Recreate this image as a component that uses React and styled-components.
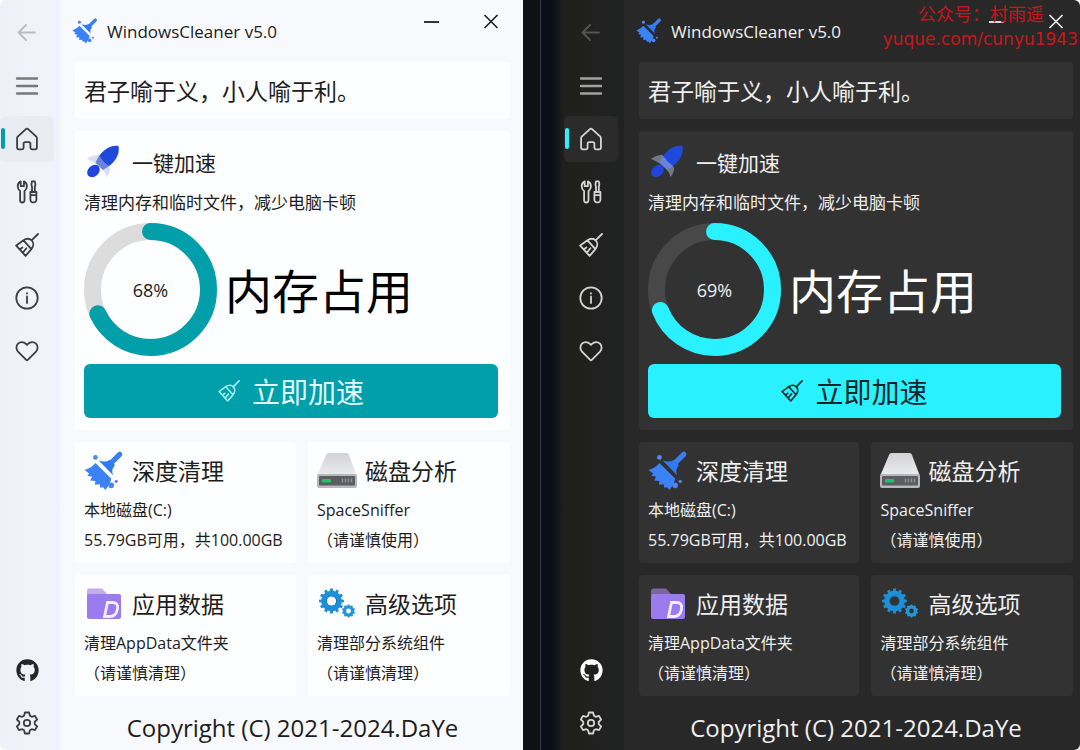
import React from "react";
import styled, { createGlobalStyle, ThemeProvider } from "styled-components";
import { FaGithub } from "react-icons/fa";

const light = {
  text: "#1d1d20",
  strong: "#000",
  icon: "#3c3d42",
  github: "#24262b",
  muted: "#bcbdc2",
  menu: "#77787c",
  sidebar: "linear-gradient(90deg, #eef2f6, #f1f3fc)",
  content: "#f8f9fd",
  card: "#fdfeff",
  active: "#e9ecf2",
  accent: "#009faa",
  onAccent: "#e4fbfd",
  buttonIcon: "#9ff0f6",
  track: "#dcdcdd",
  edge: "13px",
  titleEdge: "9px",
};

const dark = {
  text: "#efefef",
  strong: "#fff",
  icon: "#d4d4d4",
  github: "#fff",
  muted: "#555355",
  menu: "#a3a1a1",
  sidebar: "linear-gradient(90deg, #1f201d, #212222)",
  content: "#282828",
  card: "#323232",
  active: "#2b2b2b",
  accent: "#29f1ff",
  onAccent: "#10262a",
  buttonIcon: "#10262a",
  track: "#484848",
  edge: "7px",
  titleEdge: "1px",
};

const gearPath = (cx, cy, outer, inner, teeth) => {
  const step = (Math.PI * 2) / teeth;
  const points = [];
  for (let i = 0; i < teeth; i++) {
    [
      [-0.3, inner],
      [-0.2, outer],
      [0.2, outer],
      [0.3, inner],
    ].forEach(([offset, r]) => {
      const a = (i + offset) * step - Math.PI / 2;
      points.push(
        `${(cx + r * Math.cos(a)).toFixed(2)} ${(cy + r * Math.sin(a)).toFixed(2)}`
      );
    });
  }
  return `M${points.join("L")}Z`;
};

const LineIcon = ({ children }) => (
  <svg
    width="24"
    height="24"
    viewBox="0 0 24 24"
    fill="none"
    stroke="currentColor"
    strokeWidth="1.8"
    strokeLinecap="round"
    strokeLinejoin="round"
    aria-hidden="true"
  >
    {children}
  </svg>
);

const BackIcon = () => (
  <LineIcon>
    <path d="M20 11.5H4M11 4L3.5 11.5 11 19" />
  </LineIcon>
);

const MenuIcon = () => (
  <LineIcon>
    <path d="M2 4.5h20M2 12h20M2 19.5h20" strokeWidth="2.4" />
  </LineIcon>
);

const HomeIcon = () => (
  <LineIcon>
    <path d="M10.6 2.3a2.1 2.1 0 0 1 2.8 0l7.6 7c.6.5.9 1.2.9 2v9.2a1.8 1.8 0 0 1-1.8 1.8h-3.2a1.5 1.5 0 0 1-1.5-1.5v-4.3a1.3 1.3 0 0 0-1.3-1.3h-4.2a1.3 1.3 0 0 0-1.3 1.3v4.3a1.5 1.5 0 0 1-1.5 1.5H3.9a1.8 1.8 0 0 1-1.8-1.8v-9.2c0-.8.3-1.500.9-2z" />
  </LineIcon>
);

const ToolsIcon = () => (
  <LineIcon>
    <path d="M5.7 1.4C3.9 2.2 2.7 4 2.7 6.3c0 2.1.9 3.7 2.4 4.7v9.3a2.2 2.2 0 0 0 4.4 0V11c1.5-1 2.4-2.6 2.4-4.7 0-2.3-1.2-4.1-3-4.9v4.8H5.7z" />
    <path d="M17 1.4h2.8l.6 3-.6 2.6v5h-2.8V7l-.6-2.6zM15.4 12h6v7.8a2.6 2.6 0 0 1-2.6 2.6H18a2.6 2.6 0 0 1-2.6-2.6zM15.4 15.2h6" />
  </LineIcon>
);

const BroomIcon = () => (
  <LineIcon>
    <path d="M23 1l-6.2 6.2M8.5 7.3c2.9-2 6.3-1.7 8.3.2 2 2.1 2 5.7-.4 8.6zM8.5 7.3L1.2 12.6l9.4 10.3 5.8-6.8M4.8 16.5l2.6-2M7.8 19.7l3.6-4.5" />
  </LineIcon>
);

const InfoIcon = () => (
  <LineIcon>
    <circle cx="12" cy="12" r="10.7" />
    <path d="M12 10.5V17M12 7.2v.3" />
  </LineIcon>
);

const HeartIcon = () => (
  <LineIcon>
    <path d="M12 5.8l-1-1c-2.3-2.3-5.800-2.3-8-.1-2.100 2.200-2.100 5.700 0 7.900l8.200 8.300c.5.4 1.100.4 1.600 0l8.200-8.300c2.100-2.200 2.100-5.700 0-7.900-2.200-2.200-5.700-2.200-8 .1z" />
  </LineIcon>
);

const SettingsIcon = () => (
  <LineIcon>
    <path d="M9.9 1.5h4.2l.8 3.3 1.8 1 3.3-.9 2.1 3.6-2.4 2.4v2.2l2.4 2.4-2.1 3.6-3.3-.9-1.8 1-.8 3.3H9.9l-.8-3.3-1.8-1-3.3.9-2.1-3.6 2.4-2.4v-2.2L1.9 8.5 4 4.9l3.3.9 1.8-1z" />
    <circle cx="12" cy="12" r="3.2" />
  </LineIcon>
);

const MinimizeIcon = () => (
  <svg width="16" height="16" viewBox="0 0 16 16" aria-hidden="true">
    <path d="M1 8h15" stroke="currentColor" strokeWidth="1.8" />
  </svg>
);

const CloseIcon = () => (
  <svg width="16" height="16" viewBox="0 0 16 16" aria-hidden="true">
    <path
      d="M1.5 1l13 13M14.5 1l-13 13"
      stroke="currentColor"
      strokeWidth="1.6"
    />
  </svg>
);

const BlueBroom = ({ size }) => (
  <svg width={size} height={size} viewBox="0 0 42 42" aria-hidden="true">
    <path
      d="M37.5 3.5L29 12"
      stroke="#3d7df0"
      strokeWidth="5.5"
      strokeLinecap="round"
    />
    <path d="M15.5 10q6.5 2.5 11.5-.5l5.500 5.500q-4.500 4.500-2 10.500z" fill="#2f7af0" />
    <path
      d="M12 12.5L28.5 29q-.5 5-6 12L20 38l-3 .5-.5-3.5-5 .5.5-4-5.500-.5 2-4-5-1 2-2.500L.5 20Q8 17.500 12 12.500z"
      fill="#3b82f6"
    />
    <circle cx="12" cy="6.7" r="2.5" fill="#5b84ea" />
    <circle cx="28.5" cy="36" r="3" fill="#4c83ee" />
    <circle cx="33.8" cy="31.8" r="1.7" fill="#6f7fe0" />
  </svg>
);

const Rocket = () => (
  <svg width="40" height="40" viewBox="0 0 40 40" aria-hidden="true">
    <path
      d="M34.5 3C36.5 12 30 21 19 27l-7.500-7.500C16 9 25 1.500 34.500 3z"
      fill="#1f49dc"
    />
    <ellipse
      cx="9.5"
      cy="28"
      rx="7"
      ry="5.4"
      transform="rotate(-42 9.5 28)"
      fill="#1f45dc"
    />
    <path
      d="M3 16q6-4.500 11.500-4l2 2.500q3 5 8 8l1.500 2q.5 4.500-3.500 9.500-1.500-6-6-9.500-5-5-13.500-8.500z"
      fill="#b4bedc"
      fillOpacity="0.5"
    />
  </svg>
);

const Disk = () => (
  <svg width="40" height="40" viewBox="0 0 40 40" aria-hidden="true">
    <defs>
      <linearGradient id="diskTop" x1="0" y1="0" x2="0" y2="1">
        <stop offset="0" stopColor="#d2d2d4" />
        <stop offset="1" stopColor="#ececee" />
      </linearGradient>
    </defs>
    <path d="M9 4q.5-2 2.500-2h18q2 0 2.500 2l7.500 20h-39z" fill="url(#diskTop)" />
    <rect x="0" y="23" width="40" height="14" rx="2" fill="#b7b8ba" />
    <rect x="2" y="25" width="36" height="9.5" rx="1" fill="#5c5d60" />
    <rect x="5" y="28" width="9" height="3.5" rx="1" fill="#1fc36c" />
    <path
      d="M25.5 27.5v4M28.5 27.5v4M31.5 27.5v4M34.5 27.5v4"
      stroke="#8f9093"
      strokeWidth="1.5"
    />
  </svg>
);

const Folder = () => (
  <svg width="40" height="40" viewBox="0 0 40 40" aria-hidden="true">
    <path
      d="M3 7q0-2.500 2.500-2.500H18l5 5.500v6H3z"
      fill="#a57fe0"
      fillOpacity="0.65"
    />
    <rect x="3" y="10" width="34" height="25" rx="2" fill="#9b7bf0" />
    <path
      d="M23.5 18.5h5q6 0 5 6.500-1.300 7.500-8 7.500h-5z"
      fill="none"
      stroke="#f2edff"
      strokeWidth="2.8"
    />
  </svg>
);

const Gears = () => (
  <svg width="40" height="40" viewBox="0 0 40 40" aria-hidden="true">
    <path d={gearPath(14.5, 17, 12.5, 10.3, 12)} fill="#1e8fd6" />
    <path d={gearPath(31.5, 27, 6.6, 5.6, 10)} fill="#2596d8" />
    <circle cx="14.5" cy="17" r="5" fill="none" stroke="#1673b3" />
    <GearHole cx="14.5" cy="17" r="4.6" />
    <GearHole cx="31.5" cy="27" r="2.4" />
  </svg>
);

const tools = [
  {
    icon: <BlueBroom size={42} />,
    title: "深度清理",
    lines: ["本地磁盘(C:)", "55.79GB可用，共100.00GB"],
  },
  { icon: <Disk />, title: "磁盘分析", lines: ["SpaceSniffer", "（请谨慎使用）"] },
  {
    icon: <Folder />,
    title: "应用数据",
    lines: ["清理AppData文件夹", "（请谨慎清理）"],
  },
  {
    icon: <Gears />,
    title: "高级选项",
    lines: ["清理部分系统组件", "（请谨慎清理）"],
  },
];

const RADIUS = 58;

const MemoryRing = ({ value }) => {
  const length = 2 * Math.PI * RADIUS;
  return (
    <Ring role="img" aria-label={`内存占用 ${value}%`}>
      <svg width="133" height="133" viewBox="0 0 133 133">
        <RingTrack cx="66.5" cy="66.5" r={RADIUS} />
        <RingValue
          cx="66.5"
          cy="66.5"
          r={RADIUS}
          strokeDasharray={`${(length * value) / 100} ${length}`}
          transform="rotate(-90 66.5 66.5)"
        />
      </svg>
      <RingLabel>{value}%</RingLabel>
    </Ring>
  );
};

const CleanerWindow = ({ theme, memory }) => (
  <ThemeProvider theme={theme}>
    <Window>
      <Sidebar>
        <NavButton aria-label="返回" $tone="muted">
          <BackIcon />
        </NavButton>
        <NavButton aria-label="菜单" $tone="menu">
          <MenuIcon />
        </NavButton>
        <NavButton aria-label="主页" $active>
          <HomeIcon />
        </NavButton>
        <NavButton aria-label="工具">
          <ToolsIcon />
        </NavButton>
        <NavButton aria-label="清理">
          <BroomIcon />
        </NavButton>
        <NavButton aria-label="关于">
          <InfoIcon />
        </NavButton>
        <NavButton aria-label="赞助">
          <HeartIcon />
        </NavButton>
        <Spacer />
        <NavButton aria-label="GitHub" $tone="github">
          <FaGithub size={23} />
        </NavButton>
        <NavButton aria-label="设置">
          <SettingsIcon />
        </NavButton>
      </Sidebar>
      <Content>
        <TitleBar>
          <BlueBroom size={26} />
          <AppName>WindowsCleaner v5.0</AppName>
          <WindowButton aria-label="最小化">
            <MinimizeIcon />
          </WindowButton>
          <WindowButton aria-label="关闭">
            <CloseIcon />
          </WindowButton>
        </TitleBar>
        <Cards>
          <QuoteCard>君子喻于义，小人喻于利。</QuoteCard>
          <BoostCard>
            <CardHeader>
              <IconBox>
                <Rocket />
              </IconBox>
              <BoostTitle>一键加速</BoostTitle>
            </CardHeader>
            <BoostHint>清理内存和临时文件，减少电脑卡顿</BoostHint>
            <MemoryRow>
              <MemoryRing value={memory} />
              <MemoryTitle>内存占用</MemoryTitle>
            </MemoryRow>
            <BoostButton>
              <BroomIcon />
              立即加速
            </BoostButton>
          </BoostCard>
          <ToolGrid>
            {tools.map((tool) => (
              <ToolCard key={tool.title}>
                <CardHeader>
                  <IconBox>{tool.icon}</IconBox>
                  <ToolTitle>{tool.title}</ToolTitle>
                </CardHeader>
                <ToolText>
                  {tool.lines.map((line) => (
                    <p key={line}>{line}</p>
                  ))}
                </ToolText>
              </ToolCard>
            ))}
          </ToolGrid>
          <Footer>Copyright (C) 2021-2024.DaYe</Footer>
        </Cards>
      </Content>
    </Window>
  </ThemeProvider>
);

const App = () => (
  <>
    <GlobalStyle />
    <Desktop>
      <CleanerWindow theme={light} memory={68} />
      <Divider />
      <CleanerWindow theme={dark} memory={69} />
      <Watermark>
        <span>公众号：村雨遥</span>
        <WatermarkLink href="#">yuque.com/cunyu1943</WatermarkLink>
      </Watermark>
    </Desktop>
  </>
);

const GlobalStyle = createGlobalStyle`
  * {
    box-sizing: border-box;
  }

  body {
    margin: 0;
    background: #fff;
    font-family: "Open Sans", "Noto Sans CJK SC", sans-serif;
  }

  h1, h2, p {
    margin: 0;
    font-weight: 400;
  }

  button {
    border: none;
    padding: 0;
    background: transparent;
    font-family: inherit;
    cursor: pointer;
  }
`;

const Desktop = styled.div`
  position: relative;
  display: grid;
  grid-template-columns: 523fr 41fr 516fr;
  min-height: 100vh;
  border-radius: 6px;
  overflow: hidden;
`;

const Divider = styled.div`
  background: linear-gradient(
    90deg,
    #0f1113 0 41%,
    #343a45 41% 43%,
    #090e18 43% 70%,
    #1f201d
  );
`;

const Window = styled.section`
  display: flex;
  min-width: 0;
  color: ${({ theme }) => theme.text};
  background: ${({ theme }) => theme.content};
`;

// Navigation rail
const Sidebar = styled.nav`
  display: flex;
  flex-direction: column;
  gap: 7px;
  width: 60px;
  flex-shrink: 0;
  padding: 10px 6px 4px 0;
  background: ${({ theme }) => theme.sidebar};
`;

const NavButton = styled.button`
  position: relative;
  display: flex;
  align-items: center;
  justify-content: center;
  height: 46px;
  border-radius: 6px;
  color: ${({ theme, $tone }) => theme[$tone || "icon"]};
  background: ${({ theme, $active }) => ($active ? theme.active : "none")};

  &::before {
    content: "";
    display: ${({ $active }) => ($active ? "block" : "none")};
    position: absolute;
    left: 1px;
    top: 12px;
    width: 4px;
    height: 21px;
    border-radius: 2px;
    background: ${({ theme }) => theme.accent};
  }
`;

const Spacer = styled.div`
  flex: 1;
`;

const Content = styled.main`
  flex: 1;
  min-width: 0;
`;

const TitleBar = styled.header`
  display: flex;
  align-items: center;
  height: 62px;
  padding: 0 ${({ theme }) => theme.titleEdge} 0 12px;
`;

const AppName = styled.h1`
  flex: 1;
  margin-left: 9px;
  padding-top: 1px;
  font-size: 17px;
`;

const WindowButton = styled.button`
  display: flex;
  align-items: center;
  justify-content: center;
  align-self: flex-start;
  width: 46px;
  height: 44px;
  margin-left: 14px;
  color: ${({ theme }) => theme.text};
`;

const Cards = styled.div`
  display: flex;
  flex-direction: column;
  gap: 12px;
  padding: 0 ${({ theme }) => theme.edge} 0 15px;
`;

const Card = styled.div`
  border-radius: 4px;
  background: ${({ theme }) => theme.card};
`;

const QuoteCard = styled(Card)`
  padding: 2px 9px 0;
  font-size: 23px;
  line-height: 55px;
`;

const BoostCard = styled(Card)`
  display: flex;
  flex-direction: column;
  padding: 12px 12px 12px 9px;
`;

const CardHeader = styled.div`
  display: flex;
  align-items: center;
  gap: 8px;
  height: 40px;
`;

const IconBox = styled.div`
  display: flex;
  justify-content: center;
  width: 40px;
  flex-shrink: 0;
`;

const ToolTitle = styled.h2`
  font-size: 23px;
  line-height: 40px;
`;

const BoostTitle = styled(ToolTitle)`
  font-size: 21px;
`;

const BoostHint = styled.p`
  font-size: 17px;
  line-height: 40px;
`;

const MemoryRow = styled.div`
  display: flex;
  align-items: center;
  gap: 8px;
`;

const Ring = styled.div`
  display: grid;
  place-items: center;

  > * {
    grid-area: 1 / 1;
  }
`;

const RingTrack = styled.circle`
  fill: none;
  stroke: ${({ theme }) => theme.track};
  stroke-width: 17px;
`;

const RingValue = styled(RingTrack)`
  stroke: ${({ theme }) => theme.accent};
  stroke-linecap: round;
`;

const RingLabel = styled.span`
  font-size: 18px;
`;

const MemoryTitle = styled.h2`
  padding-top: 2px;
  font-size: 47px;
  line-height: 64px;
  color: ${({ theme }) => theme.strong};
`;

const BoostButton = styled.button`
  display: flex;
  align-items: center;
  justify-content: center;
  gap: 12px;
  height: 54px;
  margin-top: 8px;
  border-radius: 6px;
  font-size: 28px;
  color: ${({ theme }) => theme.onAccent};
  background: ${({ theme }) => theme.accent};

  svg {
    width: 22px;
    height: 22px;
    color: ${({ theme }) => theme.buttonIcon};
  }
`;

const ToolGrid = styled.div`
  display: grid;
  grid-template-columns: 221fr 202fr;
  gap: 12px;
`;

const ToolCard = styled(Card)`
  padding: 9px 0 8px 9px;
  min-width: 0;
`;

const ToolText = styled.div`
  margin-top: 4px;
  font-size: 16px;
  line-height: 30px;
  white-space: nowrap;
`;

const GearHole = styled.circle`
  fill: ${({ theme }) => theme.card};
`;

const Footer = styled.footer`
  text-align: center;
  font-size: 24px;
  line-height: 40px;
`;

const Watermark = styled.div`
  position: absolute;
  top: 3px;
  right: 2px;
  display: flex;
  flex-direction: column;
  align-items: flex-end;
  font-family: "DejaVu Sans", "Noto Sans CJK SC", sans-serif;
  font-size: 17px;
  line-height: 24px;
  color: #c8161b;
  pointer-events: none;

  span {
    padding-right: 34px;
    font-size: 18px;
  }
`;

const WatermarkLink = styled.a`
  color: inherit;
  text-decoration: none;
`;

export default App;
